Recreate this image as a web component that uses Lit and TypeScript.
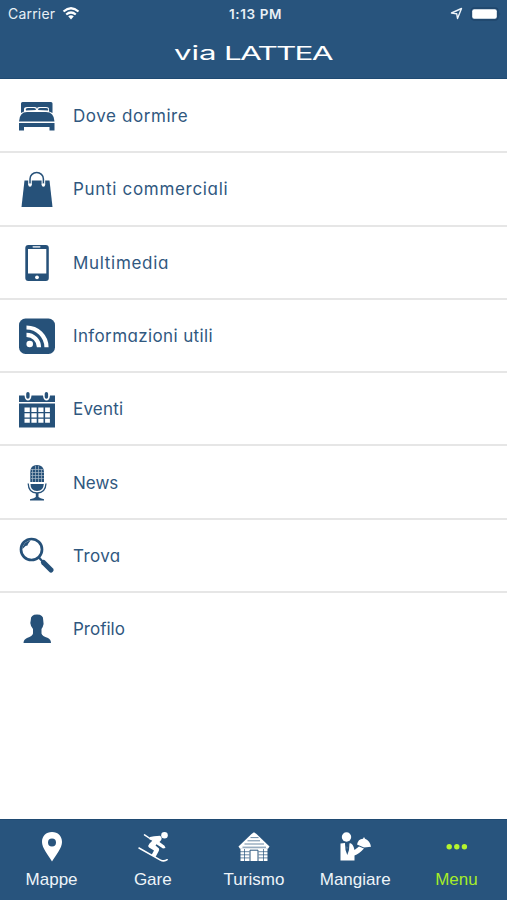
import { LitElement, html, svg, css } from "lit";
import { customElement } from "lit/decorators.js";

const B = "#265179";
const BAR = "#28547d";

const icons: Record<string, unknown> = {
  bed: svg`<g transform="translate(0 2)"><path d="M3 13V3.500Q3 2 4.500 2H33Q34.500 2 34.500 3.500V13L31 11.500V9Q31 7 28 7H21Q19 7 19 9Q19 7 17 7H9Q6 7 6 9V11.500Z"/><path d="M8 10.500Q7 8 10 8H16Q18 8 18 10ZM20 10Q20 8 22 8H28Q31 8 30 10.500Z"/><path d="M1 21.500Q1.500 12 9 12H28Q36 12 36.500 21.500Z"/><path d="M1 23H36.500V30.500H31.500V27H6V30.500H1Z"/></g>`,
  bag: svg`<path d="M6.500 9.500H31.500L34.500 36H3.500Z"/><path d="M12 14V9A6.700 7 0 0 1 25.400 9V14" fill="none" stroke="#fff" stroke-width="3.600"/><path d="M12 14V8A6.700 6.500 0 0 1 25.400 8V14" fill="none" stroke="${B}" stroke-width="1.500"/><circle cx="12" cy="14" r="1.700" fill="#fff"/><circle cx="25.400" cy="14" r="1.700" fill="#fff"/>`,
  phone: svg`<rect x="7.300" y="1" width="23.500" height="36" rx="3"/><rect x="10" y="5" width="18.300" height="24.500" fill="#fff"/><rect x="14.500" y="2" width="8" height="1.800" rx=".7" fill="#c5d1dd"/><circle cx="19" cy="33.300" r="1.900" fill="#fff"/>`,
  rss: svg`<g transform="translate(0 -.5)"><rect x="1" y="1" width="36" height="35.500" rx="6.500"/><circle cx="11.700" cy="26.500" r="3.300" fill="#fff"/><path d="M8.500 17.300A12.500 12.500 0 0 1 21 29.800M8.500 10A20 20 0 0 1 28.500 29.800" fill="none" stroke="#fff" stroke-width="4.200"/></g>`,
  calendar: svg`<path d="M1 4.500H6.500Q7 9.500 10 9.500T13.500 4.500H25Q25.500 9.500 28.500 9.500T32 4.500H37V11H1ZM1 12.500H37V36.500H1Z"/><path d="M9.900 2.800V6M28.400 2.800V6" stroke="${B}" stroke-width="3.400" stroke-linecap="round"/><path fill="#fff" d="M6.500 16.500h5.300v4.500H6.500zm6.900 0h5.300v4.500h-5.300zm6.900 0h5.200v4.500h-5.200zm6.800 0h4.800v4.500h-4.800zM6.500 22.300h5.300v4.200H6.500zm6.900 0h5.300v4.200h-5.300zm6.900 0h5.200v4.200h-5.200zm6.800 0h4.800v4.200h-4.800zM6.500 27.800h5.300v4H6.500zm6.900 0h5.300v4h-5.300zm6.900 0h5.200v4h-5.200zm6.800 0h4.800v4h-4.800z"/>`,
  mic: svg`<path d="M12.300 18V8Q12.300 1 19 1T26 8V18Z"/><path d="M12.500 20H25.800Q25.500 27 19 27T12.500 20Z"/><path d="M14.500 5V18M17.500 2V18M20.500 2V18M23.500 5V18M13 5.500H25M13 8.500H26M13 11.500H26M13 14.500H26" stroke="#a9bac9" stroke-width=".7"/><path d="M10.200 19.500Q10.500 29 19 29T28 19.500" fill="none" stroke="${B}" stroke-width="1.300"/><path d="M17.800 29H20.500V33Q22 34.500 26 35.200V36.500H12V35.200Q16.500 34.500 17.800 33Z"/>`,
  search: svg`<circle cx="13.500" cy="12.500" r="10.500" fill="none" stroke="${B}" stroke-width="2.700"/><path d="M4.500 12Q5.500 4.500 12.500 3.500L10 7L9.500 8.500L7.500 9Z"/><path d="M20.500 20L25 25" stroke="${B}" stroke-width="2.200"/><path d="M25.500 25.500L33 33" stroke="${B}" stroke-width="5.200" stroke-linecap="round"/>`,
  person: svg`<path d="M12.800 9Q12.500 3.500 19 3.500T25.200 9L25.600 13Q25 16 23.500 18V22.500Q24 25 30 27Q33 28.500 33 32H5.500Q5.500 28.500 9 27Q14.500 25 15 22.500V18Q12.500 15 12.300 12Z"/>`,
  pin: svg`<path fill-rule="evenodd" d="M18 4C12 4 8 8 8 14C8 20 14 27 18 33.500C22 27 28 20 28 14C28 8 24 4 18 4ZM18 10.500A4 4 0 1 1 18 18.500A4 4 0 1 1 18 10.500Z"/>`,
  ski: svg`<circle cx="29.500" cy="7.200" r="3.300"/><path d="M19 8.200L25 7.800Q27.500 9.500 26.200 12L24.500 14L29.500 17.800L30.500 20L28 20.500L21.500 16.300L20.500 17.500L24 20.500Q24.500 22 23.500 23.500L20.500 29L16.500 27L19 22.500L14 19.500Q12.500 17.500 14.500 15.500L18 12L14.500 11.500L15 9Z"/><path d="M9.500 6.800L18 12.500M4 20L25 31.800Q29 34 32.200 31.700" fill="none" stroke="#fff" stroke-width="1.500" stroke-linecap="round"/>`,
  cabin: svg`<path d="M18 4.300L20.500 6L33.500 18.500L32 20.800H4L2.500 18.500L15.500 6Z"/><path d="M14.500 9.600H22.500M11.500 12.800H24M8.500 16H28M6.500 19.200H30" stroke="${BAR}" stroke-width=".7"/><path d="M4.500 20.500H31.500V33H4.500Z"/><path d="M4 23.700H13.500M22.500 23.700H32M4 26.800H13.500M22.500 26.800H32M4 29.900H13.500M22.500 29.900H32M8.500 21V33M27.500 21V33" stroke="${BAR}" stroke-width=".7"/><path d="M14 33V22.200H22V33" fill="none" stroke="${BAR}" stroke-width="1"/>`,
  waiter: svg`<circle cx="9.500" cy="9" r="4.700"/><path d="M3.500 15.500L8 15L10 21L12.500 15Q16 15 17.500 22L22 18.500L27 20.500Q22 26 17.500 27.500V32.500H3.500Z"/><path d="M8 15L9.200 15.500L10 21L11.500 15.200L12.500 15L12 22L10.300 27L8.500 22Z" fill="${BAR}"/><path d="M20 16.500Q21 11 26 10.700L27 9L28 10.700Q33 12.500 34 18.800L27 19.500Z"/>`,
  dots: svg`<g fill="#b5f42e"><circle cx="11.200" cy="18.700" r="2.700"/><circle cx="18.800" cy="18.700" r="2.700"/><circle cx="26.400" cy="18.700" r="2.700"/></g>`,
};

const rows = [
  ["bed", "Dove dormire", "w3"],
  ["bag", "Punti commerciali", "w4"],
  ["phone", "Multimedia", "w4"],
  ["rss", "Informazioni utili", "w2"],
  ["calendar", "Eventi", "w1"],
  ["mic", "News", "w0"],
  ["search", "Trova", "w2"],
  ["person", "Profilo", "w0"],
];
const tabs = [
  ["pin", "Mappe"],
  ["ski", "Gare"],
  ["cabin", "Turismo"],
  ["waiter", "Mangiare"],
  ["dots", "Menu"],
];

@customElement("app-root")
export class AppRoot extends LitElement {
  static styles = css`
    :host { display: flex; flex-direction: column; width: 507px; height: 900px; background: #fff; font-family: Inter, "Liberation Sans", sans-serif; overflow: hidden; }
    * { box-sizing: border-box; }
    svg { display: block; }
    header { height: 79px; background: #28547d; color: #fff; border-bottom: 1px solid #1f4a72; flex: none; }
    .status { height: 28px; display: grid; grid-template-columns: 1fr auto 1fr; align-items: center; padding: 0 6px 0 8px; font-size: 14px; color: #e8f0f6; }
    .left { display: flex; align-items: center; gap: 7px; letter-spacing: .2px; line-height: 16px; padding-bottom: 1px; }
    .time { font-size: 13.500px; font-weight: 600; letter-spacing: .6px; padding-left: 2px; }
    .right { display: flex; align-items: center; justify-content: flex-end; gap: 7px; padding-bottom: 1px; }
    .title { height: 50px; display: flex; justify-content: center; margin: 0; font-size: 19.300px; font-weight: 400; line-height: 50px; }
    .via, .name { display: block; white-space: nowrap; }
    .via { width: 50px; }
    .name { width: 109px; }
    .via span, .name span { display: inline-block; transform-origin: left center; }
    .via span { transform: scaleX(1.62); }
    .name span { transform: scaleX(1.64); letter-spacing: -1.100px; }
    .list { flex: 1; margin: 0; padding: 1px 0 0; list-style: none; color: #30587f; }
    .row { height: 73.300px; display: flex; align-items: center; padding-left: 18px; gap: 17px; border-bottom: 2px solid #e6e6e6; font-size: 17px; font-feature-settings: "cv11"; }
    .row:last-child { border-color: transparent; }
    .row svg { width: 38px; height: 38px; fill: #265179; margin-top: 2px; }
    .row span { padding-top: 1px; }
    .w1 { letter-spacing: .2px; }
    .w2 { letter-spacing: .38px; }
    .w3 { letter-spacing: .58px; }
    .w4 { letter-spacing: .69px; }
    nav { height: 81px; background: #28547d; display: grid; grid-template-columns: repeat(5, 1fr); border-top: 1px solid #1f4a72; padding-left: 1px; flex: none; }
    .tab { display: flex; flex-direction: column; align-items: center; padding-top: 8px; color: #eef4f9; font: 17px/24px "Liberation Sans", Arial, sans-serif; gap: 4px; }
    .tab svg { width: 36px; height: 36px; fill: #fff; }
    .active { color: #a6ec28; }
  `;

  render() {
    return html`
      <header>
        <div class="status">
          <div class="left"><span>Carrier</span>
            <svg width="18" height="13" viewBox="0 0 18 13"><path d="M1.500 4.500Q9-2 16.500 4.500M4.200 7.500Q9 3.500 13.800 7.500" fill="none" stroke="#fff" stroke-width="2.200"/><path d="M6.200 9.300Q9 7 11.800 9.300L9 12.500Z" fill="#fff"/></svg>
          </div>
          <span class="time">1:13 PM</span>
          <div class="right">
            <svg width="13" height="13" viewBox="0 0 13 13"><path d="M1.500 6L11.500 1.500L7.500 11.500L6.700 6.700Z" fill="none" stroke="#eef4f9" stroke-width="1.400" stroke-linejoin="round"/></svg>
            <svg width="31" height="14" viewBox="0 0 31 14"><rect x="1" y="1" width="27" height="12" rx="3" fill="none" stroke="#1f456b" stroke-width="1.300"/><rect x="2.200" y="2.200" width="24.600" height="9.600" rx="2" fill="#fff"/><path d="M29.500 5Q31 7 29.500 9Z" fill="#1f456b"/></svg>
          </div>
        </div>
        <h1 class="title"><span class="via"><span>via</span></span><span class="name"><span>LATTEA</span></span></h1>
      </header>
      <ul class="list">
        ${rows.map(([i, t, c]) => html`<li class="row"><svg viewBox="0 0 38 38">${icons[i]}</svg><span class=${c}>${t}</span></li>`)}
      </ul>
      <nav>
        ${tabs.map(([i, t]) => html`<div class="tab ${i === "dots" ? "active" : ""}"><svg viewBox="0 0 36 36">${icons[i]}</svg><span>${t}</span></div>`)}
      </nav>`;
  }
}
